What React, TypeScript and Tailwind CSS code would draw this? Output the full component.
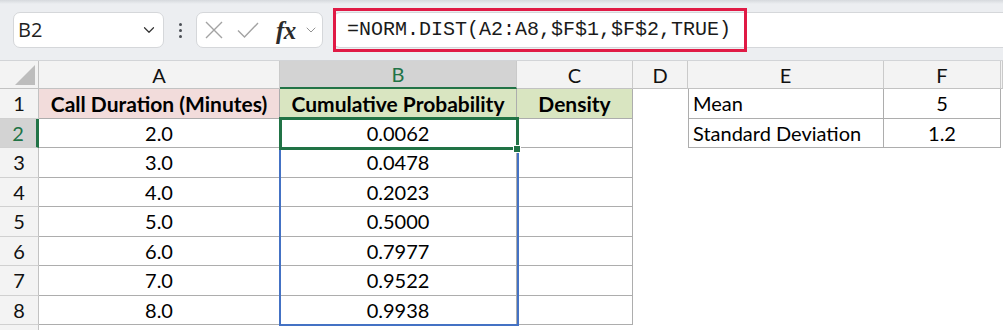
import {FC} from 'react';
import {ChevronDown} from 'lucide-react';

const durations = ['2.0', '3.0', '4.0', '5.0', '6.0', '7.0', '8.0'];
const probabilities = ['0.0062', '0.0478', '0.2023', '0.5000', '0.7977', '0.9522', '0.9938'];
const letters = ['A', 'B', 'C', 'D', 'E', 'F', ''];

const Toolbar: FC = () => {
  return (
    <div className="h-[61px] flex items-center pl-[13px] border-b border-[#d2d4d7] bg-[linear-gradient(#d6d9dd,#eceef1_4px)]">
      {/* name box */}
      <div className="w-[151px] h-[36px] rounded-[7px] bg-white border border-[#d5d7da] flex items-center justify-between pl-[4px] pr-[5px]">
        <span className="font-['Open_Sans',sans-serif] text-[20px] text-[#1f1f1f]">B2</span>
        <ChevronDown size={18} strokeWidth={1.6} className="text-[#333]" />
      </div>
      {/* grip */}
      <div className="w-[32px] flex flex-col items-center gap-[3px]">
        <span className="w-[3px] h-[3px] rounded-full bg-[#4b4f55]" />
        <span className="w-[3px] h-[3px] rounded-full bg-[#4b4f55]" />
        <span className="w-[3px] h-[3px] rounded-full bg-[#4b4f55]" />
      </div>
      {/* cancel / enter / fx */}
      <div className="w-[127px] h-[36px] rounded-[7px] bg-white border border-[#d5d7da] flex items-center pl-[8px]">
        <svg width="18" height="18" viewBox="0 0 18 18" className="text-[#a3a3a3]">
          <path d="M1 1 L17 17 M17 1 L1 17" stroke="currentColor" strokeWidth="1.4" fill="none" />
        </svg>
        <svg width="22" height="18" viewBox="0 0 22 18" className="ml-[14px] text-[#a3a3a3]">
          <path d="M1 9.5 L7.5 16 L21 2" stroke="currentColor" strokeWidth="1.4" fill="none" />
        </svg>
        <span className="ml-[17px] font-['Liberation_Serif',serif] italic font-bold text-[25px] leading-none text-[#2b2b2b] tracking-[-0.5px]">
          fx
        </span>
        <ChevronDown size={16} strokeWidth={1.4} className="ml-[7px] text-[#8a8a8a]" />
      </div>
      {/* formula bar */}
      <div className="relative ml-[10px] flex-1 h-[36px] rounded-l-[7px] bg-white border border-r-0 border-[#d5d7da] flex items-center pl-[13px]">
        <span className="font-['Liberation_Mono',monospace] text-[20px] text-[#1a1a1a] whitespace-nowrap">
          =NORM.DIST(A2:A8,$F$1,$F$2,TRUE)
        </span>
        <div className="absolute left-[-1px] top-[-5px] w-[414px] h-[44px] border-[3px] border-[#e01a45] pointer-events-none" />
      </div>
    </div>
  );
};

type RowProps = {n: number};

const SheetRow: FC<RowProps> = ({n}) => {
  const active = n === 2;
  const head = n === 1;
  const idx = n - 2;
  const grid = 'border-r border-b border-[#adadad]';
  return (
    <>
      <div
        className={`flex items-center justify-center text-[20px] border-b border-[#d0d0d0] ${
          active
            ? 'bg-[#d3d3d3] text-[#217346] border-r-[3px] border-r-[#217346]'
            : 'bg-[#f3f3f3] text-[#111] border-r border-r-[#c2c2c2]'
        }`}>
        {n <= 8 ? n : ''}
      </div>
      {n <= 8 ? (
        <>
          <div
            className={`flex items-center justify-center ${grid} ${
              head ? 'bg-[#f2dcdb] font-bold text-[21px]' : 'bg-white text-[20px]'
            }`}>
            {head ? 'Call Duration (Minutes)' : durations[idx]}
          </div>
          <div
            className={`flex items-center justify-center ${grid} ${
              head ? 'bg-[#d9e5c1] font-bold text-[21px]' : 'bg-white text-[20px]'
            }`}>
            {head ? 'Cumulative Probability' : probabilities[idx]}
          </div>
          <div
            className={`flex items-center justify-center ${grid} ${
              head ? 'bg-[#d9e5c1] font-bold text-[21px]' : 'bg-white text-[20px]'
            }`}>
            {head ? 'Density' : ''}
          </div>
          <div className="bg-white" />
          {n <= 2 ? (
            <>
              <div className={`flex items-center pl-[4px] text-[20px] border-l ${grid}`}>
                {head ? 'Mean' : 'Standard Deviation'}
              </div>
              <div className={`flex items-center justify-center text-[20px] ${grid}`}>
                {head ? '5' : '1.2'}
              </div>
            </>
          ) : (
            <>
              <div />
              <div />
            </>
          )}
          <div />
        </>
      ) : (
        <>
          <div />
          <div />
          <div />
          <div />
          <div />
          <div />
          <div />
        </>
      )}
    </>
  );
};

const Sheet: FC = () => {
  return (
    <div className="relative grid grid-cols-[39px_241px_237px_116px_55px_196px_117px_1fr] grid-rows-[28px_repeat(8,29.5px)_30px] text-black">
      {/* corner */}
      <div className="bg-[#f3f3f3] border-r border-b border-[#c2c2c2] flex items-end justify-end pr-[3px] pb-[3px]">
        <svg width="20" height="20" viewBox="0 0 20 20">
          <polygon points="20,0 20,20 0,20" fill="#bdbdbd" />
        </svg>
      </div>
      {letters.map((l, i) => (
        <div
          key={i}
          className={`flex items-center justify-center text-[20px] border-r border-[#cacaca] ${
            l === 'B'
              ? 'bg-[#d3d3d3] text-[#217346] border-b-[2px] border-b-[#217346]'
              : 'bg-[#f3f3f3] text-[#111] border-b border-b-[#c2c2c2]'
          }`}>
          {l}
        </div>
      ))}
      {[1, 2, 3, 4, 5, 6, 7, 8, 9].map(n => (
        <SheetRow key={n} n={n} />
      ))}
      {/* range outline B2:B8 */}
      <div className="absolute left-[279px] top-[57px] w-[240px] h-[208px] border-2 border-[#4472c4] pointer-events-none" />
      {/* active cell */}
      <div className="absolute left-[279px] top-[56px] w-[240px] h-[33px] border-[3px] border-[#217346] pointer-events-none" />
      <div className="absolute left-[513px] top-[84px] w-[8px] h-[8px] bg-[#217346] border border-white pointer-events-none" />
    </div>
  );
};

export default function App() {
  return (
    <div className="w-[1003px] h-[330px] overflow-hidden bg-white font-['Lato',sans-serif]">
      <Toolbar />
      <Sheet />
    </div>
  );
}
